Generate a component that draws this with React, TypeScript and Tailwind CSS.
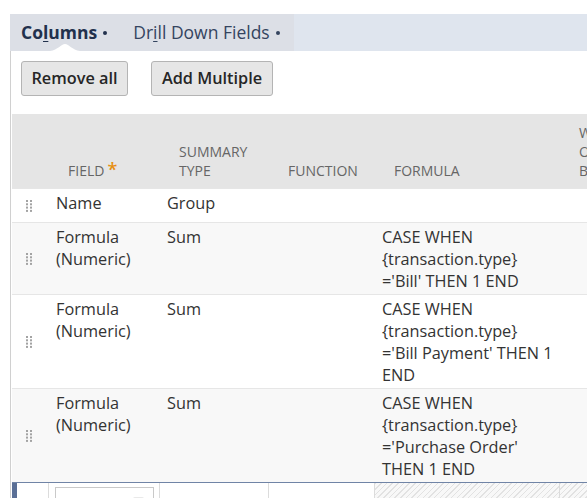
import React from 'react';

interface Row {
  field: string;
  summary: string;
  formula: string;
}

const rows: Row[] = [
  { field: 'Name', summary: 'Group', formula: '' },
  { field: 'Formula (Numeric)', summary: 'Sum', formula: "CASE WHEN {transaction.type} ='Bill' THEN 1 END" },
  { field: 'Formula (Numeric)', summary: 'Sum', formula: "CASE WHEN {transaction.type} ='Bill Payment' THEN 1 END" },
  { field: 'Formula (Numeric)', summary: 'Sum', formula: "CASE WHEN {transaction.type} ='Purchase Order' THEN 1 END" },
];

const cols = 'grid grid-cols-[36px_111px_109px_106px_185px_160px]';

const DragHandle: React.FC = () => (
  <svg width="6" height="12" viewBox="0 0 6 12" className="text-[#a3a3a3]" fill="currentColor">
    {[0, 3.3, 6.6, 9.9].map(y => (
      <React.Fragment key={y}>
        <rect x="0" y={y} width="2" height="2" />
        <rect x="4" y={y} width="2" height="2" />
      </React.Fragment>
    ))}
  </svg>
);

const Dot: React.FC = () => (
  <span className="inline-block w-[4px] h-[4px] rounded-full bg-current align-middle ml-[6px]" />
);

const TabBar: React.FC = () => (
  <div className="flex h-[37px] ml-[10px] bg-[#dfe5ee] text-[17.5px]">
    <div className="flex bg-[#dcdfe6]">
      <div className="relative flex items-center pl-[11px] pr-[13px] font-bold text-[#22314d]">
        <span>
          Co<u className="underline-offset-2">l</u>umns
        </span>
        <Dot />
        {/* notch under the active tab */}
        <svg className="absolute bottom-0 left-[40px]" width="30" height="7" viewBox="0 0 30 7">
          <path d="M0 7 C8 6 11 0 15 0 C19 0 22 6 30 7 Z" fill="#ffffff" />
        </svg>
      </div>
      <div className="flex items-center pl-[13px] pr-[14px] text-[#34445f]">
        <span>
          Dr<u className="underline-offset-2">i</u>ll Down Fields
        </span>
        <Dot />
      </div>
    </div>
  </div>
);

export default function App() {
  return (
    <div className="w-[587px] h-[498px] overflow-hidden bg-white pt-[14px] font-['Open_Sans',sans-serif] text-[#333333]">
      <TabBar />
      <div className="ml-[10px] h-full border-l border-[#d0d0d0]">
        <div className="flex gap-[23px] pl-[10px] pt-[10px] pb-[18px]">
          <button className="w-[107px] h-[35px] rounded-[3px] border border-[#b4b4b4] bg-[#e6e6e6] text-[16.3px] font-semibold text-[#262626]">
            Remove all
          </button>
          <button className="w-[122px] h-[35px] rounded-[3px] border border-[#b4b4b4] bg-[#e6e6e6] text-[16.3px] font-semibold text-[#262626]">
            Add Multiple
          </button>
        </div>

        <div className="ml-[1px] w-[707px]">
          {/* header */}
          <div className={`${cols} h-[74px] items-end bg-[#e5e5e5] pb-[8px] text-[14px] leading-[19px] text-[#666666] uppercase`}>
            <div />
            <div className="pl-[20px]">
              Field
              <span className="ml-[3px] text-[18px] leading-[10px] font-semibold text-[#e68f12]">*</span>
            </div>
            <div className="pl-[20px] pr-[4px]">Summary Type</div>
            <div className="pl-[20px]">Function</div>
            <div className="pl-[20px]">Formula</div>
            <div className="pl-[20px]">
              When
              <br />
              Ordered
              <br />
              By
            </div>
          </div>

          {/* rows */}
          {rows.map((row, i) => (
            <div
              key={i}
              className={`${cols} min-h-[34px] border-t border-[#e6e6e6] pt-[3px] pb-[2px] text-[16.3px] leading-[22px] ${
                i % 2 === 1 ? 'bg-[#f8f8f8]' : 'bg-white'
              }`}
            >
              <div className="flex items-center pl-[14px] -mt-[3px] -mb-[2px]">
                <DragHandle />
              </div>
              <div className="pl-[8px] pr-[6px]">{row.field}</div>
              <div className="pl-[8px] pr-[6px]">{row.summary}</div>
              <div className="pl-[8px] pr-[6px]" />
              <div className="pl-[8px] pr-[6px]">{row.formula}</div>
              <div />
            </div>
          ))}

          {/* edit row */}
          <div className={`${cols} h-[40px] border-t border-[#7084a6]`}>
            <div className="flex">
              <div className="w-[5px] bg-[#5a6f96]" />
            </div>
            <div className="border-l border-[#dcdcdc] pl-[6px] pt-[4px]">
              <div className="relative w-[99px] h-[30px] border border-[#c9c9c9] bg-white">
                <div className="absolute right-[9px] top-[9px] w-[11px] h-[4px] rounded-t-[2px] bg-[#e9e9e9]" />
              </div>
            </div>
            <div className="border-l border-[#dcdcdc]" />
            <div className="border-l border-[#dcdcdc]" />
            <div className="border-l border-[#dcdcdc] bg-[image:repeating-linear-gradient(135deg,#e2e2e2_0px,#e2e2e2_1px,#f8f8f8_1px,#f8f8f8_4px)]" />
            <div className="border-l border-[#dcdcdc] bg-[image:repeating-linear-gradient(135deg,#e2e2e2_0px,#e2e2e2_1px,#f8f8f8_1px,#f8f8f8_4px)]" />
          </div>
        </div>
      </div>
    </div>
  );
}
